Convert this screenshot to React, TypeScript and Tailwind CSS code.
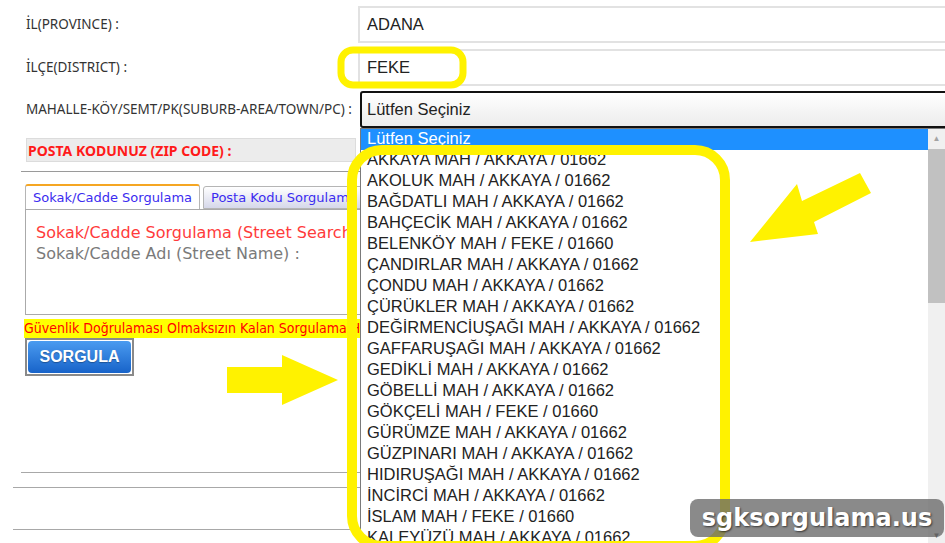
import React from 'react'

const options = [
  'AKKAYA MAH / AKKAYA / 01662',
  'AKOLUK MAH / AKKAYA / 01662',
  'BAĞDATLI MAH / AKKAYA / 01662',
  'BAHÇECİK MAH / AKKAYA / 01662',
  'BELENKÖY MAH / FEKE / 01660',
  'ÇANDIRLAR MAH / AKKAYA / 01662',
  'ÇONDU MAH / AKKAYA / 01662',
  'ÇÜRÜKLER MAH / AKKAYA / 01662',
  'DEĞİRMENCİUŞAĞI MAH / AKKAYA / 01662',
  'GAFFARUŞAĞI MAH / AKKAYA / 01662',
  'GEDİKLİ MAH / AKKAYA / 01662',
  'GÖBELLİ MAH / AKKAYA / 01662',
  'GÖKÇELİ MAH / FEKE / 01660',
  'GÜRÜMZE MAH / AKKAYA / 01662',
  'GÜZPINARI MAH / AKKAYA / 01662',
  'HIDIRUŞAĞI MAH / AKKAYA / 01662',
  'İNCİRCİ MAH / AKKAYA / 01662',
  'İSLAM MAH / FEKE / 01660',
  'KALEYÜZÜ MAH / AKKAYA / 01662',
]

const labelFont = "font-['Noto_Sans',sans-serif] text-[13.5px] text-[#333]"
const arial = "font-['Liberation_Sans',Arial,sans-serif]"
const verdana = "font-['DejaVu_Sans',Verdana,sans-serif]"

function FormRow({ label, children, className }: { label: string; children: React.ReactNode; className?: string }) {
  return (
    <div className={`flex items-center h-[37px] ${className ?? ''}`}>
      <div className={`w-[358px] shrink-0 pl-[26px] whitespace-nowrap ${labelFont}`}>{label}</div>
      <div className="flex-1 h-full">{children}</div>
    </div>
  )
}

function Dropdown() {
  return (
    <div className={`absolute left-[360px] top-[128px] w-[600px] h-[430px] bg-white border-l border-t border-[#7a7a7a] ${arial}`}>
      <div className="flex h-full">
        <div className="w-[567px] text-[16.5px] text-[#222]">
          <div className="h-[21px] leading-[19px] pl-[6px] bg-[#1e90ff] text-white overflow-hidden">Lütfen Seçiniz</div>
          {options.map((o) => (
            <div key={o} className="h-[21px] leading-[19px] pl-[6px] whitespace-nowrap">
              {o}
            </div>
          ))}
        </div>
        <div className="w-[17px] h-[415px] flex flex-col bg-[#f0f0f0]">
          <div className="h-[20px] flex items-center justify-center text-[8px] text-[#a3a3a3]">▲</div>
          <div className="h-[154px] bg-[#c1c1c1]" />
          <div className="flex-1" />
          <div className="h-[12px] flex items-start justify-center text-[8px] leading-[8px] text-[#505050]">▼</div>
        </div>
      </div>
    </div>
  )
}

function Annotations() {
  return (
    <svg className="absolute inset-0 pointer-events-none" width="945" height="543" viewBox="0 0 945 543">
      <rect x="341" y="50" width="122" height="35" rx="12" fill="none" stroke="#fff200" strokeWidth="7" />
      <rect x="352" y="150" width="373" height="396" rx="30" fill="none" stroke="#fff200" strokeWidth="10" />
      <polygon points="227,367 282,367 282,355 338,380 282,405 282,393 227,393" fill="#fff200" />
      <polygon points="871,193 860,173 802,201 797,184 750,242 818,234 814,222" fill="#fff200" />
    </svg>
  )
}

export default function App() {
  return (
    <div className="relative w-[945px] h-[543px] overflow-hidden bg-white">
      <div className="flex flex-col w-[1000px]">
        <FormRow label="İL(PROVINCE) :" className="mt-[6px]">
          <div className={`h-full border-2 border-[#e2e2e2] pl-[7px] flex items-center text-[16.5px] text-[#222] ${arial}`}>ADANA</div>
        </FormRow>
        <FormRow label="İLÇE(DISTRICT) :" className="mt-[6px]">
          <div className={`h-full border-2 border-[#e2e2e2] pl-[7px] flex items-center text-[16.5px] text-[#222] ${arial}`}>FEKE</div>
        </FormRow>
        <FormRow label="MAHALLE-KÖY/SEMT/PK(SUBURB-AREA/TOWN/PC) :" className="mt-[5px]">
          <div className={`h-full ml-[2px] border-2 border-[#111] rounded-[3px] pl-[5px] flex items-center text-[16.5px] text-[#222] bg-gradient-to-b from-white to-[#ececec] ${arial}`}>
            Lütfen Seçiniz
          </div>
        </FormRow>

        <div className="mt-[10px] ml-[26px] w-[330px] h-[24px] bg-[#ececec] border border-[#dcdcdc] flex items-center pl-[1px]">
          <span className="font-['Noto_Sans',sans-serif] text-[14px] font-bold text-[#ff1a1a]">POSTA KODUNUZ (ZIP CODE) :</span>
        </div>
        <div className="mt-[9px] ml-[21px] w-[340px] h-px bg-[#9a9a9a]" />

        <div className={`mt-[12px] ml-[25px] flex items-end gap-[3px] ${verdana} text-[13px]`}>
          <div className="w-[175px] shrink-0 h-[25px] bg-white border border-[#b5b5b5] border-t-2 border-t-[#f5a623] rounded-t-[3px] border-b-0 pl-[7px] flex items-center text-[#3b2cf0] whitespace-nowrap">
            Sokak/Cadde Sorgulama
          </div>
          <div className="w-[200px] shrink-0 h-[23px] bg-gradient-to-b from-white to-[#d6d8ea] border border-[#b5b5b5] rounded-t-[3px] pl-[7px] flex items-center text-[#3b2cf0] whitespace-nowrap">
            Posta Kodu Sorgulama
          </div>
        </div>
        <div className={`ml-[25px] w-[400px] h-[106px] border border-[#aaa] pt-[12px] pl-[10px] ${verdana} text-[16px] whitespace-nowrap`}>
          <div className="text-[#ff3b3b] leading-[21px]">Sokak/Cadde Sorgulama (Street Search)</div>
          <div className="text-[#7a7a7a] leading-[21px]">Sokak/Cadde Adı (Street Name) :</div>
        </div>

        <div className="mt-[4px] ml-[24px] w-[400px] h-[19px] bg-[#ffff00] flex items-center whitespace-nowrap">
          <span className="font-['DejaVu_Sans_Condensed','Liberation_Sans',sans-serif] text-[14px] text-[#ff0000]">
            Güvenlik Doğrulaması Olmaksızın Kalan Sorgulama Hakkınız
          </span>
        </div>

        <div className="ml-[25px] w-[109px] h-[38px] border-2 border-[#8a8a8a] p-[1px]">
          <div className={`h-full rounded-[4px] bg-gradient-to-b from-[#4a9bf0] to-[#1763c9] flex items-center justify-center text-white font-bold text-[16px] ${arial} [text-shadow:0_1px_1px_rgba(0,0,0,0.3)]`}>
            SORGULA
          </div>
        </div>

        <div className="mt-[96px] ml-[21px] w-[340px] h-px bg-[#a8a8a8]" />
        <div className="mt-[14px] ml-[13px] w-[348px] h-px bg-[#a8a8a8]" />
        <div className="mt-[41px] ml-[13px] w-[348px] h-px bg-[#a8a8a8]" />
      </div>

      <Dropdown />
      <Annotations />

      <div className="absolute left-[690px] top-[499px] w-[254px] h-[38px] rounded-[8px] bg-[rgba(105,105,105,0.78)] flex items-center justify-center">
        <span className="font-['DejaVu_Sans',sans-serif] font-bold text-[24px] text-white [text-shadow:1px_1px_2px_rgba(0,0,0,0.6)]">sgksorgulama.us</span>
      </div>
    </div>
  )
}
